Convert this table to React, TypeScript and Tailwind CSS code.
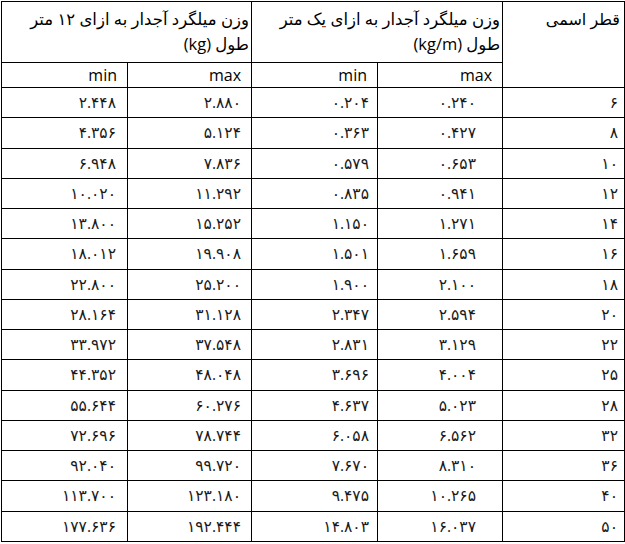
import React from 'react';

type Row = [string, string, string, string, string];

const rows: Row[] = [
  ['۶', '۰.۲۴۰', '۰.۲۰۴', '۲.۸۸۰', '۲.۴۴۸'],
  ['۸', '۰.۴۲۷', '۰.۳۶۳', '۵.۱۲۴', '۴.۳۵۶'],
  ['۱۰', '۰.۶۵۳', '۰.۵۷۹', '۷.۸۳۶', '۶.۹۴۸'],
  ['۱۲', '۰.۹۴۱', '۰.۸۳۵', '۱۱.۲۹۲', '۱۰.۰۲۰'],
  ['۱۴', '۱.۲۷۱', '۱.۱۵۰', '۱۵.۲۵۲', '۱۳.۸۰۰'],
  ['۱۶', '۱.۶۵۹', '۱.۵۰۱', '۱۹.۹۰۸', '۱۸.۰۱۲'],
  ['۱۸', '۲.۱۰۰', '۱.۹۰۰', '۲۵.۲۰۰', '۲۲.۸۰۰'],
  ['۲۰', '۲.۵۹۴', '۲.۳۴۷', '۳۱.۱۲۸', '۲۸.۱۶۴'],
  ['۲۲', '۳.۱۲۹', '۲.۸۳۱', '۳۷.۵۴۸', '۳۳.۹۷۲'],
  ['۲۵', '۴.۰۰۴', '۳.۶۹۶', '۴۸.۰۴۸', '۴۴.۳۵۲'],
  ['۲۸', '۵.۰۲۳', '۴.۶۳۷', '۶۰.۲۷۶', '۵۵.۶۴۴'],
  ['۳۲', '۶.۵۶۲', '۶.۰۵۸', '۷۸.۷۴۴', '۷۲.۶۹۶'],
  ['۳۶', '۸.۳۱۰', '۷.۶۷۰', '۹۹.۷۲۰', '۹۲.۰۴۰'],
  ['۴۰', '۱۰.۲۶۵', '۹.۴۷۵', '۱۲۳.۱۸۰', '۱۱۳.۷۰۰'],
  ['۵۰', '۱۶.۰۳۷', '۱۴.۸۰۳', '۱۹۲.۴۴۴', '۱۷۷.۶۳۶'],
];

const cell = 'border border-black';

export default function App() {
  return (
    <div className="bg-white min-h-screen pl-px pt-px" style={{ fontFamily: '"Open Sans", "DejaVu Sans", sans-serif' }}>
      <table dir="rtl" className="w-[623px] table-fixed border-collapse text-black">
        <colgroup>
          <col className="w-[122px]" />
          <col className="w-[125px]" />
          <col className="w-[126px]" />
          <col className="w-[124px]" />
          <col className="w-[126px]" />
        </colgroup>
        <thead>
          <tr className="h-[61px]">
            <th rowSpan={2} className={`${cell} align-top text-right font-normal text-[16px] leading-[24px] pt-[5px] pr-[4px]`}>
              قطر اسمی
            </th>
            <th colSpan={2} className={`${cell} align-top text-right font-normal text-[16.5px] leading-[25px] pt-[4px] pr-[2px] whitespace-nowrap`}>
              وزن میلگرد آجدار به ازای یک متر
              <br />
              طول (kg/m)
            </th>
            <th colSpan={2} className={`${cell} align-top text-right font-normal text-[16.5px] leading-[25px] pt-[4px] pr-[2px] whitespace-nowrap`}>
              وزن میلگرد آجدار به ازای ۱۲ متر
              <br />
              طول (kg)
            </th>
          </tr>
          <tr className="h-[25px] text-[16px] leading-[20px]">
            <th className={`${cell} text-right font-normal pr-[10px]`}>max</th>
            <th className={`${cell} text-right font-normal pr-[10px]`}>min</th>
            <th className={`${cell} text-right font-normal pr-[10px]`}>max</th>
            <th className={`${cell} text-right font-normal pr-[10px]`}>min</th>
          </tr>
        </thead>
        <tbody className="text-[15.5px] text-[#1a1a1a]">
          {rows.map((r) => (
            <tr key={r[0]} className="h-[30.27px]">
              <td className={`${cell} text-right pr-[6px]`}>{r[0]}</td>
              <td className={`${cell} text-right pr-[26px]`}>{r[1]}</td>
              <td className={`${cell} text-right pr-[8px]`}>{r[2]}</td>
              <td className={`${cell} text-right pr-[10px]`}>{r[3]}</td>
              <td className={`${cell} text-right pr-[11px]`}>{r[4]}</td>
            </tr>
          ))}
        </tbody>
      </table>
    </div>
  );
}
